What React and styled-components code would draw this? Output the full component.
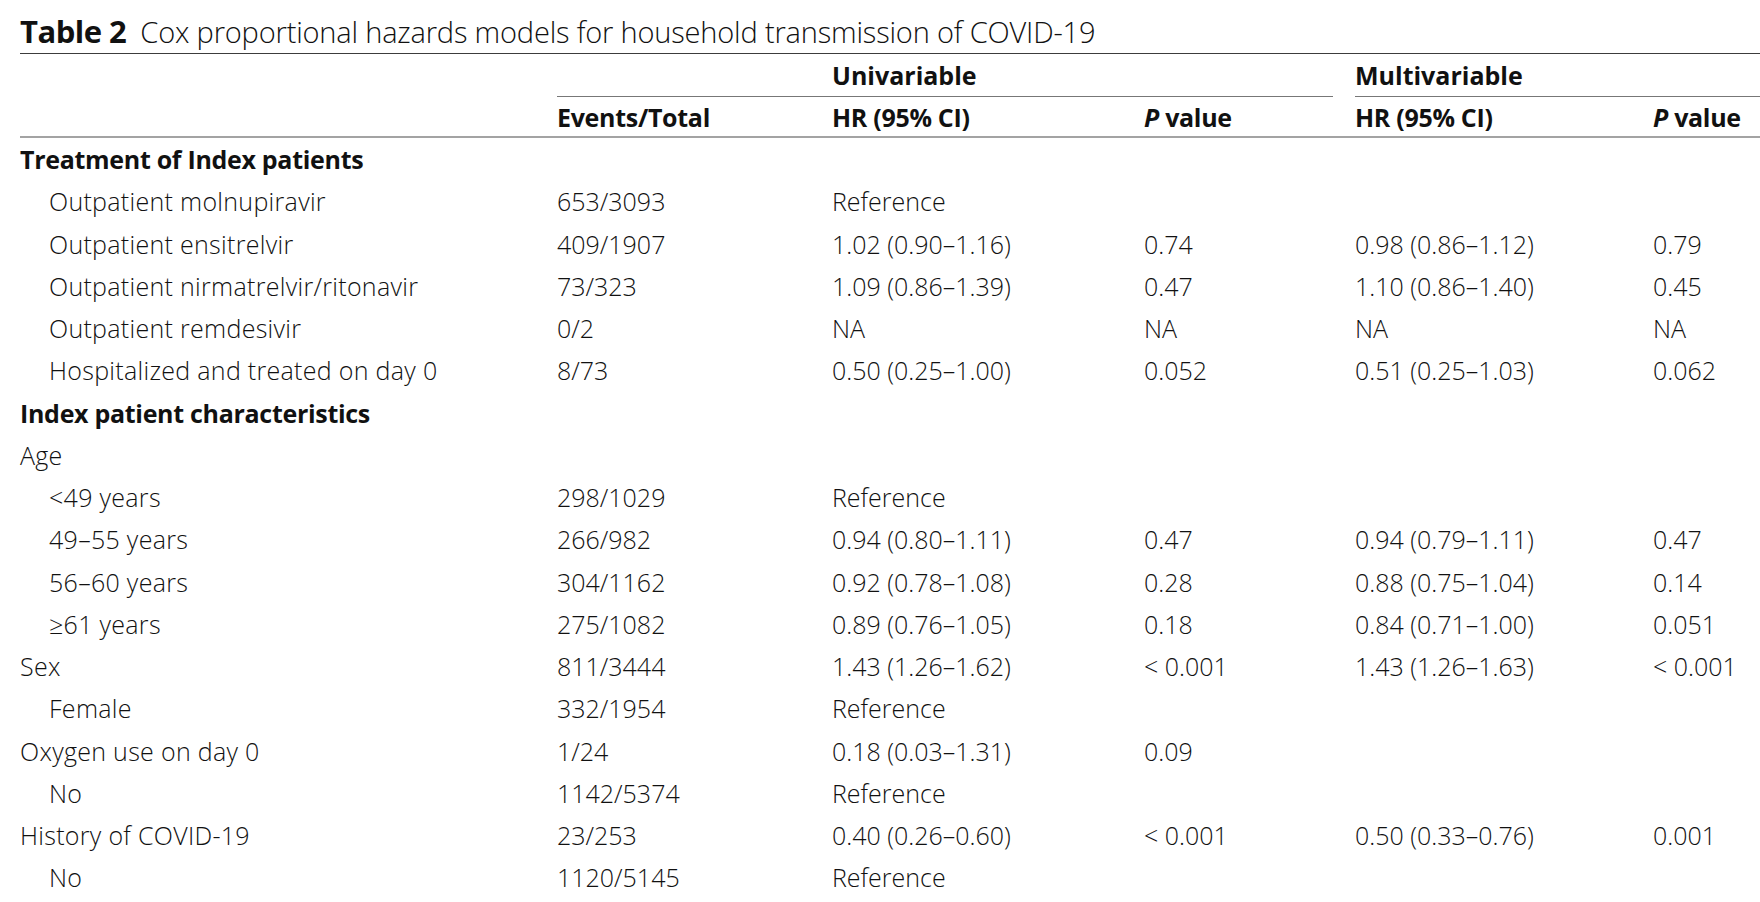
import React from 'react';
import styled, { createGlobalStyle } from 'styled-components';

const GlobalStyle = createGlobalStyle`
  html, body {
    margin: 0;
    padding: 0;
    background: #fff;
  }
  body {
    font-family: "Open Sans", "Liberation Sans", sans-serif;
    color: #111;
  }
`;

const Page = styled.div`
  padding-left: 20px;
  overflow: hidden;
`;

const Caption = styled.div`
  box-sizing: border-box;
  height: 54px;
  padding-top: 9px;
  display: flex;
  align-items: center;
  gap: 14px;
  font-size: 29px;
  font-weight: 300;
  letter-spacing: -0.18px;
  border-bottom: 1px solid #3c3c3c;
  white-space: nowrap;

  b {
    font-size: 31px;
    font-weight: 700;
    letter-spacing: -0.5px;
  }
`;

const Row = styled.div`
  display: grid;
  grid-template-columns: 537px 275px 312px 211px 298px 1fr;
  align-items: center;
  height: ${p => p.$h || 42.25}px;
  font-size: 25px;
  font-weight: 300;
  white-space: nowrap;
  box-sizing: border-box;
  border-bottom: ${p => (p.$rule ? '2px solid #a3a3a3' : 'none')};
`;

const GroupCell = styled.div`
  grid-column: ${p => p.$span};
  align-self: stretch;
  display: flex;
  align-items: center;
  padding-left: ${p => p.$pad || 0}px;
  margin-right: ${p => p.$gap || 0}px;
  border-bottom: 1px solid #777;
  font-weight: 700;
`;

const HeadCell = styled.div`
  font-weight: 700;
  letter-spacing: -0.3px;

  i {
    font-style: italic;
  }
`;

const Label = styled.div`
  padding-left: ${p => (p.$indent ? 29 : 0)}px;
  font-weight: ${p => (p.$section ? 700 : 300)};
  letter-spacing: ${p => (p.$section ? '-0.3px' : '0.3px')};
`;

const Cell = styled.div``;

const rows = [
  { label: 'Treatment of Index patients', section: true },
  { label: 'Outpatient molnupiravir', indent: true, v: ['653/3093', 'Reference'] },
  { label: 'Outpatient ensitrelvir', indent: true, v: ['409/1907', '1.02 (0.90–1.16)', '0.74', '0.98 (0.86–1.12)', '0.79'] },
  { label: 'Outpatient nirmatrelvir/ritonavir', indent: true, v: ['73/323', '1.09 (0.86–1.39)', '0.47', '1.10 (0.86–1.40)', '0.45'] },
  { label: 'Outpatient remdesivir', indent: true, v: ['0/2', 'NA', 'NA', 'NA', 'NA'] },
  { label: 'Hospitalized and treated on day 0', indent: true, v: ['8/73', '0.50 (0.25–1.00)', '0.052', '0.51 (0.25–1.03)', '0.062'] },
  { label: 'Index patient characteristics', section: true },
  { label: 'Age' },
  { label: '<49 years', indent: true, v: ['298/1029', 'Reference'] },
  { label: '49–55 years', indent: true, v: ['266/982', '0.94 (0.80–1.11)', '0.47', '0.94 (0.79–1.11)', '0.47'] },
  { label: '56–60 years', indent: true, v: ['304/1162', '0.92 (0.78–1.08)', '0.28', '0.88 (0.75–1.04)', '0.14'] },
  { label: '≥61 years', indent: true, v: ['275/1082', '0.89 (0.76–1.05)', '0.18', '0.84 (0.71–1.00)', '0.051'] },
  { label: 'Sex', v: ['811/3444', '1.43 (1.26–1.62)', '< 0.001', '1.43 (1.26–1.63)', '< 0.001'] },
  { label: 'Female', indent: true, v: ['332/1954', 'Reference'] },
  { label: 'Oxygen use on day 0', v: ['1/24', '0.18 (0.03–1.31)', '0.09'] },
  { label: 'No', indent: true, v: ['1142/5374', 'Reference'] },
  { label: 'History of COVID-19', v: ['23/253', '0.40 (0.26–0.60)', '< 0.001', '0.50 (0.33–0.76)', '0.001'] },
  { label: 'No', indent: true, v: ['1120/5145', 'Reference'] },
];

export default function App() {
  return (
    <Page>
      <GlobalStyle />
      <Caption>
        <b>Table 2</b>
        <span>Cox proportional hazards models for household transmission of COVID-19</span>
      </Caption>

      <Row $h={43}>
        <Cell />
        <GroupCell $span="2 / 5" $pad={275} $gap={22}>Univariable</GroupCell>
        <GroupCell $span="5 / 7">Multivariable</GroupCell>
      </Row>
      <Row $h={41} $rule>
        <Cell />
        <HeadCell>Events/Total</HeadCell>
        <HeadCell>HR (95% CI)</HeadCell>
        <HeadCell><i>P</i> value</HeadCell>
        <HeadCell>HR (95% CI)</HeadCell>
        <HeadCell><i>P</i> value</HeadCell>
      </Row>

      {rows.map((r, i) => (
        <Row key={i}>
          <Label $indent={r.indent} $section={r.section}>{r.label}</Label>
          {(r.v || []).map((val, j) => (
            <Cell key={j}>{val}</Cell>
          ))}
        </Row>
      ))}
    </Page>
  );
}
